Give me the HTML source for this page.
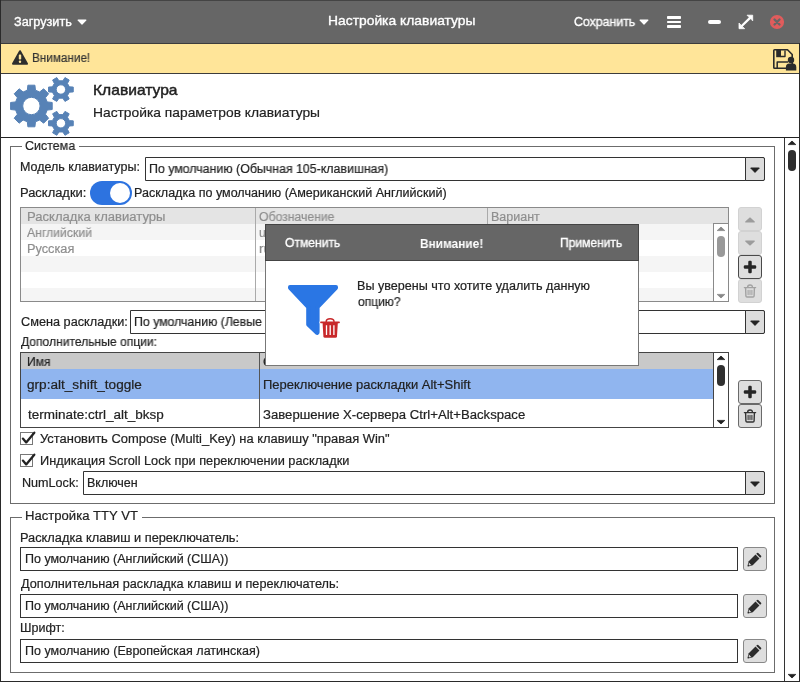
<!DOCTYPE html>
<html lang="ru"><head><meta charset="utf-8"><title>Настройка клавиатуры</title>
<style>
html,body{margin:0;padding:0;background:#fff}
#w{position:relative;width:800px;height:682px;overflow:hidden;background:#fff;font-family:"Liberation Sans", sans-serif}
#w div,#w svg{position:absolute;display:block}
.t{position:absolute;white-space:nowrap;will-change:transform;line-height:20px;transform-origin:0 50%;-webkit-text-stroke:0.2px currentColor}
</style></head><body><div id="w">
<div style="left:0px;top:0px;width:800px;height:44px;background:#666"></div>
<div style="left:0px;top:0px;width:800px;height:1px;background:#444"></div>
<div style="left:0px;top:43px;width:800px;height:1px;background:#3c3c3c"></div>
<div style="left:0px;top:44px;width:800px;height:29px;background:#ffe599"></div>
<div style="left:0px;top:73px;width:800px;height:1px;background:#3c3c3c"></div>
<div style="left:0px;top:137px;width:800px;height:1px;background:#222"></div>
<div style="left:784px;top:138px;width:1px;height:544px;background:#333"></div>
<div style="left:10px;top:146px;width:1px;height:358px;background:#6c6c6c"></div><div style="left:774px;top:146px;width:1px;height:358px;background:#6c6c6c"></div><div style="left:10px;top:503px;width:765px;height:1px;background:#6c6c6c"></div><div style="left:10px;top:146px;width:12px;height:1px;background:#6c6c6c"></div><div style="left:79px;top:146px;width:696px;height:1px;background:#6c6c6c"></div>
<div style="left:10px;top:517px;width:1px;height:156px;background:#6c6c6c"></div><div style="left:774px;top:517px;width:1px;height:156px;background:#6c6c6c"></div><div style="left:10px;top:672px;width:765px;height:1px;background:#6c6c6c"></div><div style="left:10px;top:517px;width:12px;height:1px;background:#6c6c6c"></div><div style="left:142px;top:517px;width:633px;height:1px;background:#6c6c6c"></div>
<div style="left:145px;top:157px;width:620px;height:24px;box-sizing:border-box;border:1px solid #333;background:#fff;border-radius:0 2px 2px 0"></div><div style="left:745px;top:157px;width:20px;height:24px;box-sizing:border-box;border:1px solid #333;background:#dcdcdc;border-radius:0 2px 2px 0"></div><svg style="left:748.9px;top:165.6px" width="12" height="8" viewBox="0 0 12 8"><path d="M1.7,2 L10.3,2 L6,6.4Z" fill="#222" stroke="#222" stroke-width="1" stroke-linejoin="round"/></svg>
<div style="left:130px;top:310px;width:635px;height:24px;box-sizing:border-box;border:1px solid #333;background:#fff;border-radius:0 2px 2px 0"></div><div style="left:745px;top:310px;width:20px;height:24px;box-sizing:border-box;border:1px solid #333;background:#dcdcdc;border-radius:0 2px 2px 0"></div><svg style="left:748.9px;top:318.6px" width="12" height="8" viewBox="0 0 12 8"><path d="M1.7,2 L10.3,2 L6,6.4Z" fill="#222" stroke="#222" stroke-width="1" stroke-linejoin="round"/></svg>
<div style="left:83px;top:471px;width:682px;height:24px;box-sizing:border-box;border:1px solid #333;background:#fff;border-radius:0 2px 2px 0"></div><div style="left:745px;top:471px;width:20px;height:24px;box-sizing:border-box;border:1px solid #333;background:#dcdcdc;border-radius:0 2px 2px 0"></div><svg style="left:748.9px;top:479.6px" width="12" height="8" viewBox="0 0 12 8"><path d="M1.7,2 L10.3,2 L6,6.4Z" fill="#222" stroke="#222" stroke-width="1" stroke-linejoin="round"/></svg>
<div style="left:20px;top:547px;width:718px;height:24px;box-sizing:border-box;border:1px solid #333;background:#fff"></div>
<div style="left:20px;top:594px;width:718px;height:24px;box-sizing:border-box;border:1px solid #333;background:#fff"></div>
<div style="left:20px;top:639px;width:718px;height:24px;box-sizing:border-box;border:1px solid #333;background:#fff"></div>
<div style="left:90px;top:181px;width:42px;height:24px;background:#2d73e0;border-radius:12px"></div>
<div style="left:110px;top:183px;width:20px;height:20px;background:#fff;border-radius:10px"></div>
<div style="left:20px;top:207px;width:709px;height:95px;box-sizing:border-box;border:1px solid #8a8a8a;background:#fff"></div>
<div style="left:21px;top:208px;width:707px;height:16px;background:#e4e4e4"></div>
<div style="left:21px;top:224px;width:692px;height:16px;background:#f5f5f5"></div>
<div style="left:21px;top:256px;width:692px;height:16px;background:#f5f5f5"></div>
<div style="left:21px;top:288px;width:692px;height:13px;background:#f5f5f5"></div>
<div style="left:255px;top:208px;width:1px;height:93px;background:#aaa"></div>
<div style="left:487px;top:208px;width:1px;height:93px;background:#aaa"></div>
<div style="left:713px;top:224px;width:1px;height:77px;background:#8a8a8a"></div>
<div style="left:713px;top:223px;width:16px;height:1px;background:#8a8a8a"></div>
<div style="left:717px;top:236px;width:8px;height:21px;background:#999;border-radius:4px"></div>
<svg style="left:716px;top:226px" width="10" height="6" viewBox="0 0 10 6"><path d="M1.2,4.6 L5,1 L8.8,4.6Z" fill="#888" stroke="#888" stroke-width="0.8" stroke-linejoin="round"/></svg>
<svg style="left:716px;top:293px" width="10" height="6" viewBox="0 0 10 6"><path d="M1.2,1.4 L5,5 L8.8,1.4Z" fill="#888" stroke="#888" stroke-width="0.8" stroke-linejoin="round"/></svg>
<div style="left:738px;top:207px;width:24px;height:24px;box-sizing:border-box;border:1px solid #d2d2d2;background:#dedede;border-radius:3px"></div><svg style="left:743.1px;top:215.3px" width="14" height="10" viewBox="-7 -5 14 10"><path d="M-4.3,2 L0,-2 L4.3,2Z" fill="#9c9c9c" stroke="#9c9c9c" stroke-width="1.1" stroke-linejoin="round"/></svg>
<div style="left:738px;top:231px;width:24px;height:24px;box-sizing:border-box;border:1px solid #d2d2d2;background:#dedede;border-radius:3px"></div><svg style="left:743.1px;top:238px" width="14" height="10" viewBox="-7 -5 14 10"><path d="M-4.3,-2 L0,2 L4.3,-2Z" fill="#9c9c9c" stroke="#9c9c9c" stroke-width="1.1" stroke-linejoin="round"/></svg>
<div style="left:738px;top:255px;width:24px;height:24px;box-sizing:border-box;border:1px solid #4a4a4a;background:#dedede;border-radius:3px"></div><svg style="left:742px;top:258.6px" width="16" height="16" viewBox="-8 -8 16 16"><rect x="-6.2" y="-1.75" width="12.4" height="3.5" rx="1.2" fill="#262626"/><rect x="-1.75" y="-6.2" width="3.5" height="12.4" rx="1.2" fill="#262626"/></svg>
<div style="left:738px;top:279px;width:24px;height:24px;box-sizing:border-box;border:1px solid #d2d2d2;background:#dedede;border-radius:3px"></div><svg style="left:742.1px;top:282.2px" width="16" height="18" viewBox="-8 -9 16 18"><g fill="none" stroke="#a2a2a2" stroke-width="1.4" stroke-linecap="round" stroke-linejoin="round"><path d="M-5.6,-3.4H5.6"/><path d="M-2.4,-3.6 Q-2.4,-6 0,-6 Q2.4,-6 2.4,-3.6"/><path d="M-4.4,-3.2 L-4.1,5 Q-4,6 -3,6 H3 Q4,6 4.1,5 L4.4,-3.2"/><path d="M-1.9,-0.8V3.6M0,-0.8V3.6M1.9,-0.8V3.6" stroke-width="1.1"/></g></svg>
<div style="left:20px;top:352px;width:709px;height:76px;box-sizing:border-box;border:1px solid #444;background:#fff"></div>
<div style="left:21px;top:353px;width:692px;height:16px;background:#c9c9c9"></div>
<div style="left:21px;top:369px;width:692px;height:30px;background:#90b5ef"></div>
<div style="left:259px;top:353px;width:1px;height:74px;background:#555"></div>
<div style="left:713px;top:353px;width:1px;height:74px;background:#444"></div>
<div style="left:717px;top:365px;width:8px;height:21px;background:#303030;border-radius:4px"></div>
<svg style="left:716px;top:355px" width="10" height="6" viewBox="0 0 10 6"><path d="M1.2,4.6 L5,1 L8.8,4.6Z" fill="#222" stroke="#222" stroke-width="0.8" stroke-linejoin="round"/></svg>
<svg style="left:716px;top:419px" width="10" height="6" viewBox="0 0 10 6"><path d="M1.2,1.4 L5,5 L8.8,1.4Z" fill="#222" stroke="#222" stroke-width="0.8" stroke-linejoin="round"/></svg>
<div style="left:738px;top:380px;width:24px;height:24px;box-sizing:border-box;border:1px solid #6a6a6a;background:#dedede;border-radius:3px"></div><svg style="left:742.1px;top:383.6px" width="16" height="16" viewBox="-8 -8 16 16"><rect x="-6.2" y="-1.75" width="12.4" height="3.5" rx="1.2" fill="#262626"/><rect x="-1.75" y="-6.2" width="3.5" height="12.4" rx="1.2" fill="#262626"/></svg>
<div style="left:738px;top:404px;width:24px;height:24px;box-sizing:border-box;border:1px solid #6a6a6a;background:#dedede;border-radius:3px"></div><svg style="left:742.1px;top:407px" width="16" height="18" viewBox="-8 -9 16 18"><g fill="none" stroke="#333" stroke-width="1.4" stroke-linecap="round" stroke-linejoin="round"><path d="M-5.6,-3.4H5.6"/><path d="M-2.4,-3.6 Q-2.4,-6 0,-6 Q2.4,-6 2.4,-3.6"/><path d="M-4.4,-3.2 L-4.1,5 Q-4,6 -3,6 H3 Q4,6 4.1,5 L4.4,-3.2"/><path d="M-1.9,-0.8V3.6M0,-0.8V3.6M1.9,-0.8V3.6" stroke-width="1.1"/></g></svg>
<div style="left:20px;top:432px;width:13px;height:13px;box-sizing:border-box;border:1px solid #777;background:#fff"></div><svg style="left:19px;top:428px" width="20" height="20" viewBox="19 428 20 20"><path d="M22.9,438.6 L26.2,442.4 L34.3,432.7" fill="none" stroke="#222" stroke-width="2.3" stroke-linecap="round" stroke-linejoin="round"/></svg>
<div style="left:20px;top:454px;width:13px;height:13px;box-sizing:border-box;border:1px solid #777;background:#fff"></div><svg style="left:19px;top:450px" width="20" height="20" viewBox="19 450 20 20"><path d="M22.9,460.6 L26.2,464.4 L34.3,454.7" fill="none" stroke="#222" stroke-width="2.3" stroke-linecap="round" stroke-linejoin="round"/></svg>
<div style="left:743px;top:547px;width:24px;height:24px;box-sizing:border-box;border:1px solid #888;background:#dedede;border-radius:3px"></div>
<svg style="left:744.4px;top:549.9px" width="20" height="20" viewBox="-10 -10 20 20"><g transform="rotate(45)"><path d="M-2.8,-5.9 V-7.2 Q-2.8,-8 -2,-8 H2 Q2.8,-8 2.8,-7.2 V-5.9Z" fill="#2c2c2c"/><path d="M-2.8,-4.9 H2.8 V4.6 L0.5,8.7 Q0,9.4 -0.5,8.7 L-2.8,4.6Z" fill="#2c2c2c"/><path d="M-1.5,5.4 H1.5 L0.6,7.1 H-0.6Z" fill="#d8d8d8"/></g></svg>
<div style="left:743px;top:594px;width:24px;height:24px;box-sizing:border-box;border:1px solid #888;background:#dedede;border-radius:3px"></div>
<svg style="left:744.4px;top:596.9px" width="20" height="20" viewBox="-10 -10 20 20"><g transform="rotate(45)"><path d="M-2.8,-5.9 V-7.2 Q-2.8,-8 -2,-8 H2 Q2.8,-8 2.8,-7.2 V-5.9Z" fill="#2c2c2c"/><path d="M-2.8,-4.9 H2.8 V4.6 L0.5,8.7 Q0,9.4 -0.5,8.7 L-2.8,4.6Z" fill="#2c2c2c"/><path d="M-1.5,5.4 H1.5 L0.6,7.1 H-0.6Z" fill="#d8d8d8"/></g></svg>
<div style="left:743px;top:639px;width:24px;height:24px;box-sizing:border-box;border:1px solid #888;background:#dedede;border-radius:3px"></div>
<svg style="left:744.4px;top:641.9px" width="20" height="20" viewBox="-10 -10 20 20"><g transform="rotate(45)"><path d="M-2.8,-5.9 V-7.2 Q-2.8,-8 -2,-8 H2 Q2.8,-8 2.8,-7.2 V-5.9Z" fill="#2c2c2c"/><path d="M-2.8,-4.9 H2.8 V4.6 L0.5,8.7 Q0,9.4 -0.5,8.7 L-2.8,4.6Z" fill="#2c2c2c"/><path d="M-1.5,5.4 H1.5 L0.6,7.1 H-0.6Z" fill="#d8d8d8"/></g></svg>
<div style="left:788px;top:150px;width:8px;height:21px;background:#2e2e2e;border-radius:4px"></div>
<svg style="left:787px;top:140px" width="10" height="6" viewBox="0 0 10 6"><path d="M1.2,4.6 L5,1 L8.8,4.6Z" fill="#222" stroke="#222" stroke-width="0.8" stroke-linejoin="round"/></svg>
<svg style="left:787px;top:673px" width="10" height="6" viewBox="0 0 10 6"><path d="M1.2,1.4 L5,5 L8.8,1.4Z" fill="#222" stroke="#222" stroke-width="0.8" stroke-linejoin="round"/></svg>
<svg style="left:75.5px;top:18px" width="12" height="8" viewBox="-6 -4 12 8"><path d="M-3.9,-1.9 L3.9,-1.9 L0,2Z" fill="#fff" stroke="#fff" stroke-width="1.2" stroke-linejoin="round"/></svg>
<svg style="left:637.7px;top:17.8px" width="12" height="8" viewBox="-6 -4 12 8"><path d="M-3.9,-1.9 L3.9,-1.9 L0,2Z" fill="#fff" stroke="#fff" stroke-width="1.2" stroke-linejoin="round"/></svg>
<div style="left:666.7px;top:16px;width:14.6px;height:2.8px;background:#fff;border-radius:0.8px"></div>
<div style="left:666.7px;top:20.6px;width:14.6px;height:2.8px;background:#fff;border-radius:0.8px"></div>
<div style="left:666.7px;top:25.2px;width:14.6px;height:2.8px;background:#fff;border-radius:0.8px"></div>
<div style="left:707.6px;top:19.7px;width:13.3px;height:4.4px;background:#fff;border-radius:2px"></div>
<svg style="left:736px;top:12px" width="20" height="20" viewBox="736 12 20 20"><g fill="#fff" stroke="#fff" stroke-linejoin="round" stroke-linecap="round"><path d="M742,25.8 L749.8,18.1" stroke-width="2.3" fill="none"/><path d="M747.4,15.2 L752.7,15.2 L752.7,20.5Z" stroke-width="0.8"/><path d="M739,23.4 L739,28.7 L744.3,28.7Z" stroke-width="0.8"/></g></svg>
<svg style="left:769px;top:14px" width="16" height="16" viewBox="-8 -8 16 16"><circle r="7.1" fill="#e05c5c"/><path d="M-2.5,-2.5 L2.5,2.5 M2.5,-2.5 L-2.5,2.5" stroke="#666" stroke-width="2.3" stroke-linecap="round"/></svg>
<svg style="left:11px;top:49px" width="18" height="17" viewBox="0 0 18 17"><path d="M9,2.2 L16,14.8 L2,14.8Z" fill="#2e2e2e" stroke="#2e2e2e" stroke-width="2" stroke-linejoin="round"/><rect x="7.8" y="5.6" width="2.4" height="5" rx="0.8" fill="#ffe599"/><circle cx="9" cy="12.8" r="1.2" fill="#ffe599"/></svg>
<svg style="left:770px;top:46px" width="30" height="27" viewBox="770 46 30 27"><path d="M774.6,49.8 H787.5 L792.2,54.5 V67.4 Q792.2,68.2 791.4,68.2 H774.6 Q773.8,68.2 773.8,67.4 V50.6 Q773.8,49.8 774.6,49.8Z" fill="none" stroke="#2b2b2b" stroke-width="1.6" stroke-linejoin="round"/><rect x="776.2" y="50" width="4.8" height="7.2" fill="#2b2b2b"/><path d="M780.5,56.5 H785 V50.4" fill="none" stroke="#2b2b2b" stroke-width="1.4" stroke-linejoin="round"/><path d="M777.2,68 V62 H788" fill="none" stroke="#2b2b2b" stroke-width="1.5" stroke-linejoin="round"/><circle cx="791" cy="60" r="3.2" fill="#2b2b2b"/><path d="M785.9,70.4 V67.2 Q785.9,63.6 789.4,63.6 H792.8 Q796.3,63.6 796.3,67.2 V70.4Z" fill="#2b2b2b"/></svg>
<svg style="left:0;top:0" width="90" height="137" viewBox="0 0 90 137"><path d="M35.48,121.78 L34.91,126.81 L27.89,126.81 L27.32,121.78 L23.12,120.04 L19.17,123.19 L14.21,118.23 L17.36,114.28 L15.62,110.08 L10.59,109.51 L10.59,102.49 L15.62,101.92 L17.36,97.72 L14.21,93.77 L19.17,88.81 L23.12,91.96 L27.32,90.22 L27.89,85.19 L34.91,85.19 L35.48,90.22 L39.68,91.96 L43.63,88.81 L48.59,93.77 L45.44,97.72 L47.18,101.92 L52.21,102.49 L52.21,109.51 L47.18,110.08 L45.44,114.28 L48.59,118.23 L43.63,123.19 L39.68,120.04Z M40.10,106.00 A8.70,8.70 0 1,0 22.70,106.00 A8.70,8.70 0 1,0 40.10,106.00Z M69.40,86.86 L73.26,87.07 L73.26,91.93 L69.40,92.14 L67.44,95.54 L69.18,98.99 L64.98,101.42 L62.86,98.18 L58.94,98.18 L56.82,101.42 L52.62,98.99 L54.36,95.54 L52.40,92.14 L48.54,91.93 L48.54,87.07 L52.40,86.86 L54.36,83.46 L52.62,80.01 L56.82,77.58 L58.94,80.82 L62.86,80.82 L64.98,77.58 L69.18,80.01 L67.44,83.46Z M65.60,89.50 A4.70,4.70 0 1,0 56.20,89.50 A4.70,4.70 0 1,0 65.60,89.50Z M69.40,120.66 L73.26,120.87 L73.26,125.73 L69.40,125.94 L67.44,129.34 L69.18,132.79 L64.98,135.22 L62.86,131.98 L58.94,131.98 L56.82,135.22 L52.62,132.79 L54.36,129.34 L52.40,125.94 L48.54,125.73 L48.54,120.87 L52.40,120.66 L54.36,117.26 L52.62,113.81 L56.82,111.38 L58.94,114.62 L62.86,114.62 L64.98,111.38 L69.18,113.81 L67.44,117.26Z M65.60,123.30 A4.70,4.70 0 1,0 56.20,123.30 A4.70,4.70 0 1,0 65.60,123.30Z" fill="#5782b6" fill-rule="evenodd" stroke="#5782b6" stroke-width="1" stroke-linejoin="round"/></svg>
<span class="t" style="left:13.55px;top:12.00px;font-size:12.5px;color:#ffffff;-webkit-text-stroke-width:0.35px;transform:scaleX(1.0123)">Загрузить</span>
<span class="t" style="left:327.57px;top:11.00px;font-size:13.5px;color:#ffffff;-webkit-text-stroke-width:0.35px;transform:scaleX(1.0261)">Настройка клавиатуры</span>
<span class="t" style="left:573.78px;top:12.00px;font-size:12.5px;color:#ffffff;-webkit-text-stroke-width:0.35px;transform:scaleX(0.9865)">Сохранить</span>
<span class="t" style="left:32.06px;top:48.00px;font-size:12.5px;color:#333333;transform:scaleX(0.9384)">Внимание!</span>
<span class="t" style="left:93.32px;top:80.00px;font-size:15px;color:#222222;-webkit-text-stroke-width:0.45px;transform:scaleX(1.0404)">Клавиатура</span>
<span class="t" style="left:92.58px;top:103.00px;font-size:13.5px;color:#222222;transform:scaleX(1.0226)">Настройка параметров клавиатуры</span>
<span class="t" style="left:24.53px;top:136.00px;font-size:12.5px;color:#222222;transform:scaleX(0.9952)">Система</span>
<span class="t" style="left:20.10px;top:157.00px;font-size:12.5px;color:#222222;transform:scaleX(0.9974)">Модель клавиатуры:</span>
<span class="t" style="left:149.21px;top:159.00px;font-size:12.5px;color:#222222;transform:scaleX(0.9890)">По умолчанию (Обычная 105-клавишная)</span>
<span class="t" style="left:20.07px;top:183.00px;font-size:12.5px;color:#222222;transform:scaleX(1.0336)">Раскладки:</span>
<span class="t" style="left:134.40px;top:183.00px;font-size:12.5px;color:#222222;transform:scaleX(1.0031)">Раскладка по умолчанию (Американский Английский)</span>
<span class="t" style="left:27.16px;top:207.00px;font-size:12.5px;color:#8e8e8e;transform:scaleX(1.0450)">Раскладка клавиатуры</span>
<span class="t" style="left:259.20px;top:207.00px;font-size:12.5px;color:#8e8e8e;transform:scaleX(0.9769)">Обозначение</span>
<span class="t" style="left:490.61px;top:207.00px;font-size:12.5px;color:#8e8e8e;transform:scaleX(0.9928)">Вариант</span>
<span class="t" style="left:26.75px;top:223.00px;font-size:12.5px;color:#8e8e8e;transform:scaleX(0.9777)">Английский</span>
<span class="t" style="left:27.08px;top:239.00px;font-size:12.5px;color:#8e8e8e;transform:scaleX(1.0205)">Русская</span>
<span class="t" style="left:259.41px;top:223.00px;font-size:12.5px;color:#8e8e8e;transform:scaleX(0.9693)">us</span>
<span class="t" style="left:259.29px;top:239.00px;font-size:12.5px;color:#8e8e8e;transform:scaleX(1.0973)">ru</span>
<span class="t" style="left:20.62px;top:312.00px;font-size:12.5px;color:#222222;transform:scaleX(1.0161)">Смена раскладки:</span>
<span class="t" style="left:134.22px;top:312.00px;font-size:12.5px;color:#222222;transform:scaleX(0.9850)">По умолчанию (Левые</span>
<span class="t" style="left:266.94px;top:312.00px;font-size:12.5px;color:#222222;transform:scaleX(1.1653)">Alt+Shift)</span>
<span class="t" style="left:20.80px;top:332.00px;font-size:12.5px;color:#222222;transform:scaleX(0.9664)">Дополнительные опции:</span>
<span class="t" style="left:26.73px;top:352.00px;font-size:12.5px;color:#222222;transform:scaleX(0.9679)">Имя</span>
<span class="t" style="left:262.78px;top:352.00px;font-size:12.5px;color:#222222;transform:scaleX(1.0348)">Описание</span>
<span class="t" style="left:27.30px;top:375.00px;font-size:12.5px;color:#222222;transform:scaleX(1.0874)">grp:alt_shift_toggle</span>
<span class="t" style="left:263.26px;top:375.00px;font-size:12.5px;color:#222222;transform:scaleX(1.0390)">Переключение раскладки Alt+Shift</span>
<span class="t" style="left:27.60px;top:405.00px;font-size:12.5px;color:#222222;transform:scaleX(1.0792)">terminate:ctrl_alt_bksp</span>
<span class="t" style="left:263.03px;top:405.00px;font-size:12.5px;color:#222222;transform:scaleX(1.0511)">Завершение X-сервера Ctrl+Alt+Backspace</span>
<span class="t" style="left:39.61px;top:429.00px;font-size:12.5px;color:#222222;transform:scaleX(1.0341)">Установить Compose (Multi_Key) на клавишу &quot;правая Win&quot;</span>
<span class="t" style="left:39.68px;top:451.00px;font-size:12.5px;color:#222222;transform:scaleX(1.0202)">Индикация Scroll Lock при переключении раскладки</span>
<span class="t" style="left:22.19px;top:473.00px;font-size:12.5px;color:#222222;transform:scaleX(1.0073)">NumLock:</span>
<span class="t" style="left:87.20px;top:473.00px;font-size:12.5px;color:#222222;transform:scaleX(0.9959)">Включен</span>
<span class="t" style="left:25.35px;top:506.00px;font-size:12.5px;color:#222222;transform:scaleX(1.0475)">Настройка TTY VT</span>
<span class="t" style="left:20.08px;top:528.00px;font-size:12.5px;color:#222222;transform:scaleX(1.0233)">Раскладка клавиш и переключатель:</span>
<span class="t" style="left:24.80px;top:549.00px;font-size:12.5px;color:#222222;transform:scaleX(0.9990)">По умолчанию (Английский (США))</span>
<span class="t" style="left:20.80px;top:574.00px;font-size:12.5px;color:#222222;transform:scaleX(1.0153)">Дополнительная раскладка клавиш и переключатель:</span>
<span class="t" style="left:24.80px;top:596.00px;font-size:12.5px;color:#222222;transform:scaleX(0.9990)">По умолчанию (Английский (США))</span>
<span class="t" style="left:20.11px;top:618.00px;font-size:12.5px;color:#222222;transform:scaleX(0.9908)">Шрифт:</span>
<span class="t" style="left:24.80px;top:641.00px;font-size:12.5px;color:#222222;transform:scaleX(1.0023)">По умолчанию (Европейская латинская)</span>
<div style="left:265px;top:224px;width:374px;height:142px;box-sizing:border-box;border:1px solid #777;background:#fff"></div>
<div style="left:265px;top:224px;width:374px;height:37px;box-sizing:border-box;border:1px solid #444;background:#666"></div>
<svg style="left:284px;top:281px" width="60" height="60" viewBox="284 281 60 60"><path d="M290,287 H336 V287.8 L317.6,307 V332.2 Q317.6,333.4 316.6,332.6 L308.2,324.6 V307 L290,287.8Z" fill="#2a76e4" stroke="#2a76e4" stroke-width="4" stroke-linejoin="round"/><g fill="#fff" stroke="#fff" stroke-width="2.6" stroke-linejoin="round" stroke-linecap="round"><path d="M322.6,323 L323.4,336.2 Q323.5,337.8 325,337.8 H335.4 Q336.9,337.8 337,336.2 L337.8,323Z"/><path d="M320.8,322.4H339.2"/><path d="M326.2,321.6 Q326.2,318.8 330.1,318.8 Q334,318.8 334,321.6" fill="none"/></g><path d="M322.6,323 L323.4,336.2 Q323.5,337.8 325,337.8 H335.4 Q336.9,337.8 337,336.2 L337.8,323Z" fill="#c8282a"/><g fill="none" stroke="#c8282a" stroke-width="1.6" stroke-linecap="round"><path d="M320.9,322.4H339.1"/><path d="M326.2,321.6 Q326.2,318.8 330.1,318.8 Q334,318.8 334,321.6" stroke-width="1.5"/></g><path d="M326.5,325.2V335M330.2,325.2V335M333.9,325.2V335" stroke="#fff" stroke-width="1.3" fill="none"/></svg>
<span class="t" style="left:285.11px;top:233.00px;font-size:12.5px;color:#ffffff;-webkit-text-stroke-width:0.35px;transform:scaleX(0.9672)">Отменить</span>
<span class="t" style="left:419.98px;top:234.00px;font-size:12.5px;color:#ffffff;font-weight:700;-webkit-text-stroke-width:0px;transform:scaleX(0.9488)">Внимание!</span>
<span class="t" style="left:559.64px;top:233.00px;font-size:12.5px;color:#ffffff;-webkit-text-stroke-width:0.35px;transform:scaleX(0.9642)">Применить</span>
<span class="t" style="left:357.49px;top:276.00px;font-size:12.5px;color:#222222;transform:scaleX(1.0066)">Вы уверены что хотите удалить данную</span>
<span class="t" style="left:357.84px;top:292.00px;font-size:12.5px;color:#222222;transform:scaleX(0.9635)">опцию?</span>
<div style="left:0px;top:0px;width:1px;height:682px;background:#2a2a2a"></div>
<div style="left:799px;top:43px;width:1px;height:639px;background:#2a2a2a"></div>
<div style="left:0px;top:681px;width:800px;height:1px;background:#2a2a2a"></div>
</div></body></html>
